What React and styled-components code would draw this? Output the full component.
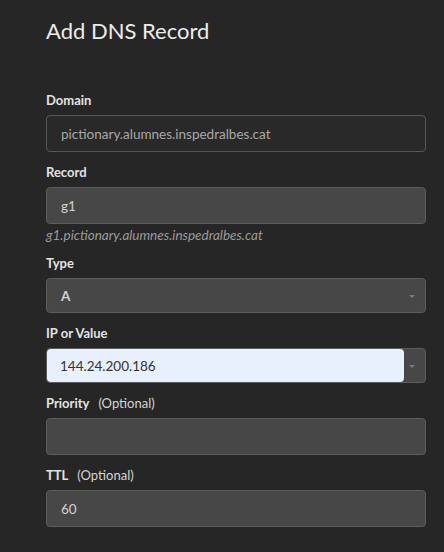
import React from "react";
import styled, { createGlobalStyle } from "styled-components";

const GlobalStyle = createGlobalStyle`
  html, body {
    margin: 0;
    padding: 0;
    background: #262626;
  }
  body {
    font-family: Lato, "Open Sans", sans-serif;
    color: #e6e6e6;
  }
`;

const Panel = styled.div`
  width: 444px;
  height: 552px;
  box-sizing: border-box;
  padding: 14px 18px 0 46px;
  background: #262626;
`;

const Title = styled.h2`
  margin: 0 0 42px;
  font-size: 22px;
  font-weight: 400;
  line-height: 34px;
  color: #ececec;
`;

const Group = styled.div`
  margin-bottom: 10px;
`;

const Label = styled.label`
  display: flex;
  align-items: baseline;
  gap: 9px;
  height: 20px;
  margin-bottom: 5px;
  font-size: 13px;
  font-weight: 700;
  line-height: 20px;
  color: #e2e2e2;
`;

const Optional = styled.span`
  font-weight: 400;
  color: #d4d4d4;
`;

const Box = styled.div`
  position: relative;
  display: flex;
  align-items: center;
  width: 380px;
  height: ${(p) => (p.$select ? "35px" : "37px")};
  box-sizing: border-box;
  border: 1px solid ${(p) => (p.$readonly ? "#555" : "#5c5c5c")};
  border-radius: 4px;
  background: ${(p) => (p.$readonly ? "#292929" : "#474747")};
`;

const Value = styled.div`
  display: flex;
  align-items: center;
  box-sizing: border-box;
  height: 100%;
  flex: 1;
  padding-left: 14px;
  font-size: 13.5px;
  font-weight: ${(p) => (p.$bold ? 700 : 400)};
  color: ${(p) => (p.$muted ? "#a8a8a8" : "#d2d2d2")};
`;

const Autofill = styled.div`
  display: flex;
  align-items: center;
  box-sizing: border-box;
  height: 100%;
  width: 357px;
  padding-left: 13px;
  border-radius: 4px;
  background: #e8f0fe;
  font-size: 13.5px;
  color: #333;
`;

const Arrow = styled.span`
  position: absolute;
  right: 10px;
  top: 50%;
  margin-top: -1px;
  width: 0;
  height: 0;
  border-left: 3px solid transparent;
  border-right: 3px solid transparent;
  border-top: 3px solid #7a7a7a;
`;

const Hint = styled.div`
  margin-top: 3px;
  font-size: 13.5px;
  font-style: italic;
  line-height: 16px;
  color: #9b9b9b;
`;

export default function App() {
  return (
    <Panel>
      <GlobalStyle />
      <Title>Add DNS Record</Title>

      <Group>
        <Label>Domain</Label>
        <Box $readonly>
          <Value $muted>pictionary.alumnes.inspedralbes.cat</Value>
        </Box>
      </Group>

      <Group>
        <Label>Record</Label>
        <Box>
          <Value>g1</Value>
        </Box>
        <Hint>g1.pictionary.alumnes.inspedralbes.cat</Hint>
      </Group>

      <Group>
        <Label>Type</Label>
        <Box $select>
          <Value $bold>A</Value>
          <Arrow />
        </Box>
      </Group>

      <Group>
        <Label>IP or Value</Label>
        <Box $select>
          <Autofill>144.24.200.186</Autofill>
          <Arrow />
        </Box>
      </Group>

      <Group>
        <Label>
          Priority <Optional>(Optional)</Optional>
        </Label>
        <Box>
          <Value />
        </Box>
      </Group>

      <Group>
        <Label>
          TTL <Optional>(Optional)</Optional>
        </Label>
        <Box>
          <Value>60</Value>
        </Box>
      </Group>
    </Panel>
  );
}
